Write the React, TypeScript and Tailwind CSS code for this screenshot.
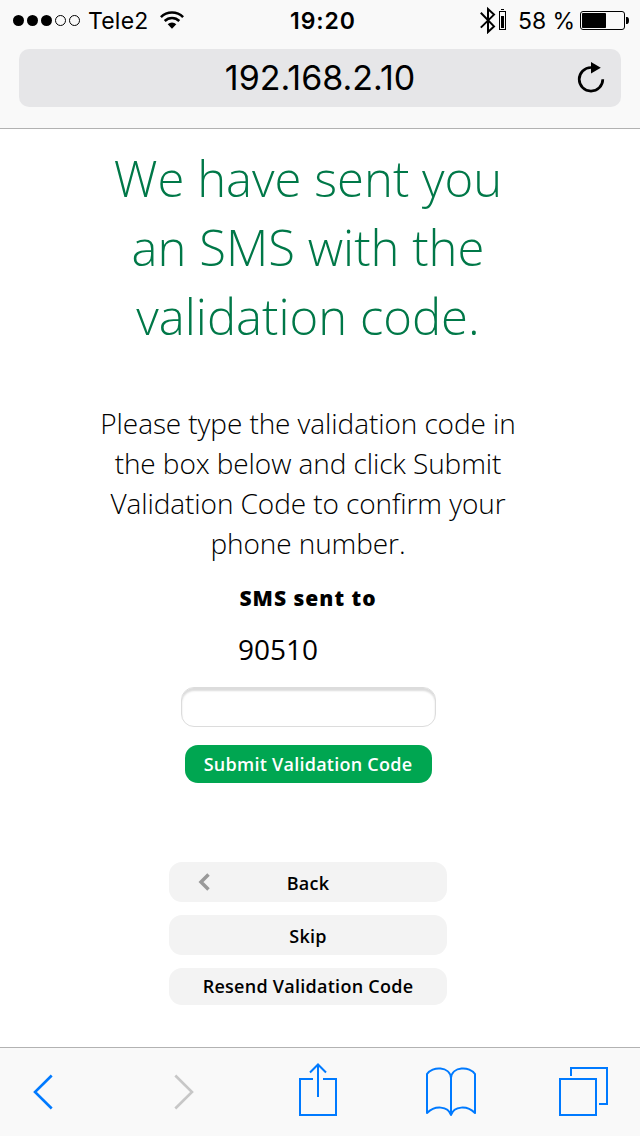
import { ReactNode } from "react";

const SignalDots = () => (
  <svg width="69" height="16" viewBox="0 0 69 16">
    {[6.5, 20.5, 34.5].map((cx) => (
      <circle key={cx} cx={cx} cy="8.5" r="5.5" />
    ))}
    {[48.5, 62.5].map((cx) => (
      <circle key={cx} cx={cx} cy="8.5" r="5" fill="none" stroke="black" />
    ))}
  </svg>
);

const WifiIcon = () => (
  <svg width="24" height="18" viewBox="0 0 24 18" fill="none" stroke="black">
    <path d="M0.9 6.1 A15.8 15.8 0 0 1 23.1 6.1" strokeWidth="2.6" />
    <path d="M4.7 10 A10.4 10.4 0 0 1 19.3 10" strokeWidth="2.5" />
    <path
      d="M7.7 13.2 A6.1 6.1 0 0 1 16.3 13.2 L12 17.7 Z"
      fill="black"
      stroke="none"
    />
  </svg>
);

const BluetoothIcon = () => (
  <svg
    width="17"
    height="28"
    viewBox="0 0 17 28"
    fill="none"
    stroke="black"
    strokeWidth="2"
  >
    <path d="M0.8 6.8 L14 20.4 L8 26 V3 L14 8.6 L0.8 21.6" />
  </svg>
);

const SmallBatteryIcon = () => (
  <svg width="8" height="22" viewBox="0 0 8 22">
    <path d="M2 0.5h3" stroke="black" />
    <rect x="0.5" y="2.5" width="6" height="18" fill="none" stroke="black" />
    <rect x="2" y="7" width="3" height="12" />
  </svg>
);

const BatteryIcon = () => (
  <svg width="49" height="20" viewBox="0 0 49 20">
    <rect
      x="0.5"
      y="1.5"
      width="44"
      height="18"
      rx="2.5"
      fill="none"
      stroke="black"
    />
    <rect x="2" y="3" width="24" height="15" rx="0.8" />
    <path d="M46 7h1c1.3 0 2 1.5 2 3.5s-.7 3.5-2 3.5h-1z" />
  </svg>
);

const ReloadIcon = () => (
  <svg width="28" height="32" viewBox="0 0 28 32" className="shrink-0">
    <path
      d="M14 5.5 A11.8 11.8 0 1 0 25.8 17.3"
      fill="none"
      stroke="black"
      strokeWidth="2.7"
    />
    <path d="M14 0 L23.8 5.8 L14 11.6 Z" />
  </svg>
);

const ToolbarIcon = ({
  children,
  className = "stroke-[#007aff]",
}: {
  children: ReactNode;
  className?: string;
}) => (
  <button className={className}>
    <svg
      width="60"
      height="60"
      viewBox="0 0 60 60"
      fill="none"
      strokeWidth="2"
    >
      {children}
    </svg>
  </button>
);

const BrowserHeader = () => (
  <header className="h-[129px] border-b border-[#b2b2b2] bg-[#f9f9f9] font-['Inter',sans-serif] text-black">
    <div className="flex h-[40px] items-center">
      <div className="flex w-[290px] items-center pl-3">
        <SignalDots />
        <span className="ml-[7px] w-[60px] whitespace-nowrap pt-[2px] text-[23px] leading-[40px] tracking-[0.2px]">
          Tele2
        </span>
        <span className="ml-[12px]">
          <WifiIcon />
        </span>
      </div>
      <span className="w-[66px] whitespace-nowrap pt-[2px] text-center text-[23px] font-semibold leading-[40px] tracking-[0.9px]">
        19:20
      </span>
      <div className="flex w-[284px] items-center justify-end pr-[11px]">
        <BluetoothIcon />
        <span className="ml-[2px]">
          <SmallBatteryIcon />
        </span>
        <span className="ml-[11px] w-[57px] whitespace-nowrap pt-[2px] text-[23px] leading-[40px] tracking-[-0.1px]">
          58 %
        </span>
        <span className="ml-[5px]">
          <BatteryIcon />
        </span>
      </div>
    </div>
    <div className="mx-[19px] mt-[9px] flex h-[58px] items-center rounded-[10px] bg-[#e6e6e8] pr-4">
      <span className="flex-1 whitespace-nowrap pl-[44px] text-center text-[34px] leading-[56px]">
        192.168.2.10
      </span>
      <ReloadIcon />
    </div>
  </header>
);

const BrowserToolbar = () => (
  <nav className="flex h-[89px] items-start border-t border-[#b2b2b2] bg-[#f9f9f9] pl-[13px] pt-[13px]">
    <ToolbarIcon>
      <path d="M38.7 14.5 L22 31 L38.7 47.5" strokeWidth="2.6" />
    </ToolbarIcon>
    <ToolbarIcon className="ml-[80px] stroke-[#c7c7c7]">
      <path d="M22.3 14.5 L39 31 L22.3 47.5" strokeWidth="2.6" />
    </ToolbarIcon>
    <ToolbarIcon className="ml-[75px] stroke-[#007aff]">
      <path d="M25 18H12V54H48V18H35" />
      <path d="M30 36V4M22 11.5L30 3.5L38 11.5" />
    </ToolbarIcon>
    <ToolbarIcon className="ml-[73px] stroke-[#007aff]">
      <path
        d="M30 54V17C29 5 11 5 6 13V52C14 44 27 45 30 54C33 45 46 44 54 52V13C49 5 31 5 30 17"
        strokeLinejoin="round"
      />
    </ToolbarIcon>
    <ToolbarIcon className="ml-[73px] stroke-[#007aff]">
      <rect x="6" y="18" width="36" height="36" />
      <path d="M17 15V7H53V43H45" />
    </ToolbarIcon>
  </nav>
);

const App = () => {
  return (
    <div className="flex h-[1136px] w-[640px] flex-col overflow-hidden bg-white font-['Open_Sans',sans-serif] text-black">
      <BrowserHeader />
      <main className="flex w-[616px] flex-1 flex-col items-center pt-[15px]">
        <h1 className="whitespace-nowrap text-center text-[49px] font-light leading-[69px] text-[#007848]">
          We have sent you
          <br />
          an SMS with the
          <br />
          validation code.
        </h1>
        <p className="mt-[52px] whitespace-nowrap text-center text-[28px] font-light leading-[40px] tracking-[-0.09px]">
          Please type the validation code in
          <br />
          the box below and click Submit
          <br />
          Validation Code to confirm your
          <br />
          phone number.
        </p>
        <p className="mt-[20px] text-[21px] font-extrabold leading-[30px] tracking-[1px]">
          SMS sent to
        </p>
        <p className="mr-[60px] mt-[17px] text-[28px] leading-[38px]">90510</p>
        <input
          type="text"
          className="mt-[19px] h-[40px] w-[255px] rounded-[13px] border border-[#dcdcdc] bg-white px-3 shadow-[inset_0_3px_2px_#dcdcdc] outline-none"
        />
        <button className="mt-[18px] h-[38px] w-[247px] rounded-[13px] bg-[#00a651] text-[18px] font-semibold tracking-[0.25px] text-white">
          Submit Validation Code
        </button>
        <div className="mt-[79px] flex w-[278px] flex-col gap-[13px] text-[18px] font-semibold tracking-[0.26px]">
          <button className="flex h-[40px] items-center rounded-[13px] bg-[#f3f3f3]">
            <svg
              width="14"
              height="20"
              viewBox="0 0 14 20"
              className="ml-[28px]"
              fill="none"
              stroke="#999999"
              strokeWidth="3.5"
            >
              <path d="M11.5 2.5L4 10L11.5 17.5" />
            </svg>
            <span className="mr-[42px] flex-1 pt-[2px] text-center">Back</span>
          </button>
          <button className="h-[40px] rounded-[13px] bg-[#f3f3f3] pt-[2px]">
            Skip
          </button>
          <button className="h-[37px] rounded-[13px] bg-[#f3f3f3]">
            Resend Validation Code
          </button>
        </div>
      </main>
      <BrowserToolbar />
    </div>
  );
};

export default App;
